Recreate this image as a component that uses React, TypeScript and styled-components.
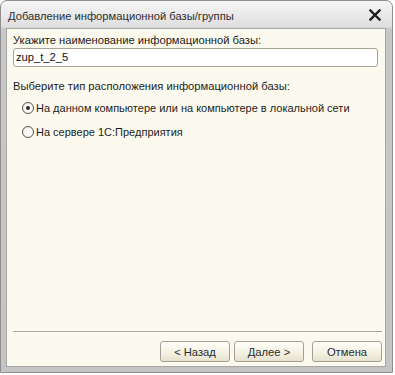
import React from "react";
import styled, { createGlobalStyle } from "styled-components";

const Global = createGlobalStyle`
  html, body { margin: 0; padding: 0; background: #ffffff; }
  body { font-family: "Liberation Sans", Arial, sans-serif; }
`;

const Window = styled.div`
  width: 393px;
  height: 373px;
  box-sizing: border-box;
  border: 1px solid #8e8e8e;
  border-radius: 7px 7px 0 0;
  background: linear-gradient(#f6f6f6 0px, #dedede 26px, #c8c8c8 28px, #c4c4c4 100%);
  display: flex;
  flex-direction: column;
`;

const TitleBar = styled.div`
  height: 27px;
  display: flex;
  align-items: center;
  padding: 0 10px 0 7px;
  flex: none;
`;

const Title = styled.div`
  flex: 1;
  font-size: 11.2px;
  color: #2e2e2e;
  padding-top: 2px;
`;

const CloseButton = styled.div`
  width: 14px;
  height: 14px;
  display: flex;
  align-items: center;
  justify-content: center;
  margin-top: 1px;
`;

const Client = styled.div`
  flex: 1;
  margin: 0 6px 5px 5px;
  background: #fcfaee;
  border: 1px solid #a6a6a6;
  display: flex;
  flex-direction: column;
  padding: 4px 3px 4px 6px;
`;

const Label = styled.div<{ $top?: number }>`
  font-size: 11.2px;
  line-height: 14px;
  color: #1c1c1c;
  margin-top: ${(p) => p.$top ?? 0}px;
`;

const Input = styled.div`
  margin-top: 1px;
  margin-right: 4px;
  height: 19px;
  box-sizing: border-box;
  border: 1px solid #a7a596;
  border-radius: 3px;
  background: #ffffff;
  font-size: 11.2px;
  line-height: 17px;
  padding-left: 2px;
  color: #111;
`;

const RadioGroup = styled.div`
  display: flex;
  flex-direction: column;
  gap: 4px;
  margin-top: 5px;
  padding-left: 9px;
`;

const RadioRow = styled.div`
  display: flex;
  align-items: center;
  height: 20px;
  gap: 2px;
  font-size: 11px;
  color: #1c1c1c;
`;

const RadioCircle = styled.div<{ $checked?: boolean }>`
  width: 12px;
  height: 12px;
  box-sizing: border-box;
  border: 1px solid #55595e;
  border-radius: 50%;
  background: radial-gradient(circle at 60% 60%, #ffffff 0%, #f4f2e8 60%, #dcdad0 100%);
  display: flex;
  align-items: center;
  justify-content: center;
  &::after {
    content: "";
    display: ${(p) => (p.$checked ? "block" : "none")};
    width: 4px;
    height: 4px;
    border-radius: 50%;
    background: #2b2b2b;
  }
`;

const Spacer = styled.div`
  flex: 1;
`;

const Separator = styled.div`
  height: 1px;
  background: #a9a79a;
  border-bottom: 1px solid #ffffff;
`;

const Footer = styled.div`
  display: flex;
  justify-content: flex-end;
  gap: 4px;
  margin-top: 8px;
`;

const Button = styled.div<{ $gap?: number }>`
  width: 70px;
  height: 21px;
  box-sizing: border-box;
  border: 1px solid #a4a192;
  border-radius: 3px;
  background: linear-gradient(#fffffb, #f3f0e2 60%, #e6e2d0);
  font-size: 11.2px;
  color: #2a2a2a;
  display: flex;
  align-items: center;
  justify-content: center;
  margin-left: ${(p) => p.$gap ?? 0}px;
`;

export default function App() {
  return (
    <>
      <Global />
      <Window>
        <TitleBar>
          <Title>Добавление информационной базы/группы</Title>
          <CloseButton>
            <svg width="12" height="12" viewBox="0 0 12 12">
              <path d="M1.5 1.5 L10.5 10.5 M10.5 1.5 L1.5 10.5" stroke="#1e1e1e" strokeWidth="2.4" strokeLinecap="square" />
            </svg>
          </CloseButton>
        </TitleBar>
        <Client>
          <Label $top={0}>Укажите наименование информационной базы:</Label>
          <Input>zup_t_2_5</Input>
          <Label $top={12}>Выберите тип расположения информационной базы:</Label>
          <RadioGroup>
            <RadioRow>
              <RadioCircle $checked />
              На данном компьютере или на компьютере в локальной сети
            </RadioRow>
            <RadioRow>
              <RadioCircle />
              На сервере 1С:Предприятия
            </RadioRow>
          </RadioGroup>
          <Spacer />
          <Separator />
          <Footer>
            <Button>&lt; Назад</Button>
            <Button>Далее &gt;</Button>
            <Button $gap={4}>Отмена</Button>
          </Footer>
        </Client>
      </Window>
    </>
  );
}
